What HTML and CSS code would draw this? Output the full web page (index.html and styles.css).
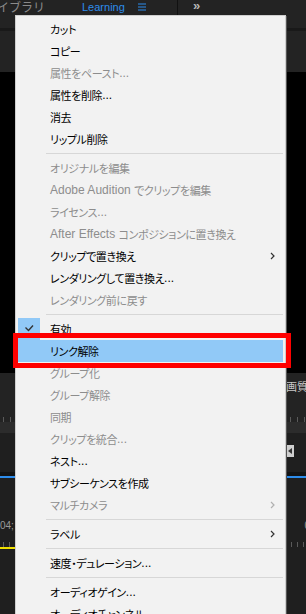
FILE: index.html
```html
<!DOCTYPE html>
<html lang="ja">
<head>
<meta charset="utf-8">
<link rel="stylesheet" href="styles.css">
</head>
<body>
<div class="app">
  <div class="topbar">
    <span class="lib">イブラリ</span>
    <span class="learning">Learning</span>
    <svg class="hamb" width="8" height="8" viewBox="0 0 8 8"><path d="M0 1h8M0 4h8M0 7h8" stroke="#2d8ceb" stroke-width="1.2"/></svg>
    <span class="vsep"></span>
    <span class="more">»</span>
  </div>
  <div class="topline"></div>
  <div class="gap"></div>
  <div class="monitor"></div>
  <div class="timeline">
    <div class="tl-head"><span class="quality">画質</span></div>
    <div class="ticks"></div>
    <div class="band"></div>
    <div class="tracks"><span class="toolicon"><span class="tri"></span></span></div>
    <div class="shade"></div>
    <div class="blueline"></div>
    <div class="lower">
      <div class="tc-row"><span class="tc">04;</span><span class="tc-r">0</span></div>
      <div class="ticks2"></div>
      <div class="yellow"></div>
    </div>
  </div>
</div>

<div class="menu">
  <div class="row">カット</div>
  <div class="row">コピー</div>
  <div class="row dis">属性をペースト<span class="lat">...</span></div>
  <div class="row">属性を削除<span class="lat">...</span></div>
  <div class="row">消去</div>
  <div class="row">リップル削除</div>
  <div class="sep"></div>
  <div class="row dis">オリジナルを編集</div>
  <div class="row dis"><span class="lat">Adobe Audition&nbsp;</span>でクリップを編集</div>
  <div class="row dis">ライセンス<span class="lat">...</span></div>
  <div class="row dis"><span class="lat">After Effects&nbsp;</span>コンポジションに置き換え</div>
  <div class="row">クリップで置き換え<svg class="chev" width="5" height="8" viewBox="0 0 5 8"><path d="M1 1l3 3-3 3" fill="none" stroke="#333" stroke-width="1.2"/></svg></div>
  <div class="row">レンダリングして置き換え<span class="lat">...</span></div>
  <div class="row dis">レンダリング前に戻す</div>
  <div class="sep"></div>
  <div class="row"><span class="check"><svg width="22" height="22" viewBox="0 0 22 22"><path d="M7.5 9.5l3 3 4.5-5" fill="none" stroke="#333" stroke-width="1.4"/></svg></span>有効</div>
  <div class="row hl">リンク解除</div>
  <div class="row dis">グループ化</div>
  <div class="row dis">グループ解除</div>
  <div class="row dis">同期</div>
  <div class="row dis">クリップを統合<span class="lat">...</span></div>
  <div class="row">ネスト<span class="lat">...</span></div>
  <div class="row">サブシーケンスを作成</div>
  <div class="row dis">マルチカメラ<svg class="chev" width="5" height="8" viewBox="0 0 5 8"><path d="M1 1l3 3-3 3" fill="none" stroke="#b0b0b0" stroke-width="1.2"/></svg></div>
  <div class="sep"></div>
  <div class="row">ラベル<svg class="chev" width="5" height="8" viewBox="0 0 5 8"><path d="M1 1l3 3-3 3" fill="none" stroke="#333" stroke-width="1.2"/></svg></div>
  <div class="sep"></div>
  <div class="row">速度・デュレーション<span class="lat">...</span></div>
  <div class="sep"></div>
  <div class="row">オーディオゲイン<span class="lat">...</span></div>
  <div class="row">オーディオチャンネル<span class="lat">...</span></div>
</div>
</body>
</html>
```

FILE: styles.css
```css
html, body {
  margin: 0;
  padding: 0;
}
body {
  width: 306px;
  height: 614px;
  overflow: hidden;
  background: #232323;
  position: relative;
  font-family: "Liberation Sans", "Noto Sans CJK JP", sans-serif;
}
.app {
  display: flex;
  flex-direction: column;
  height: 614px;
}
.topbar {
  height: 28px;
  background: #232323;
  display: flex;
  align-items: flex-start;
  flex: none;
}
.lib {
  margin-left: -3px;
  margin-top: -1px;
  font-size: 12px;
  line-height: 16px;
  color: #8a8a8a;
  font-family: "Noto Sans CJK JP", sans-serif;
  width: 85px;
}
.learning {
  font-size: 11px;
  line-height: 14px;
  color: #2d8ceb;
  width: 56px;
}
.hamb {
  margin-top: 3px;
}
.vsep {
  width: 1px;
  height: 15px;
  background: #111;
  margin-left: 31px;
}
.more {
  margin-left: 15px;
  font-size: 13px;
  line-height: 12px;
  font-weight: bold;
  color: #b8b8b8;
}
.topline {
  height: 3px;
  background: #191919;
  flex: none;
}
.gap {
  height: 41px;
  background: #232323;
  flex: none;
}
.monitor {
  height: 301px;
  background: #000;
  flex: none;
}
.timeline {
  flex: 1;
  display: flex;
  flex-direction: column;
  background: #1f1f1f;
}
.tl-head {
  height: 37px;
  background: #232323;
  display: flex;
  justify-content: flex-end;
  align-items: flex-start;
}
.quality {
  margin-top: 6px;
  margin-right: -2px;
  font-family: "Noto Sans CJK JP", sans-serif;
  font-size: 11px;
  line-height: 14px;
  color: #c8c8c8;
}
.ticks {
  height: 12px;
  background:
    repeating-linear-gradient(to right, transparent 0 3px, #5a5a5a 3px 4px, transparent 4px 7px) bottom / 100% 5px no-repeat,
    #232323;
}
.band {
  height: 11px;
  background: #2c2c2c;
}
.tracks {
  height: 39px;
  background: #1f1f1f;
  display: flex;
  justify-content: flex-end;
  align-items: flex-start;
}
.toolicon {
  margin-top: 12px;
  margin-right: 12px;
  width: 8px;
  height: 12px;
  background: #cfcfcf;
  display: flex;
  align-items: center;
  justify-content: center;
}
.tri {
  width: 0;
  height: 0;
  border-top: 3px solid transparent;
  border-bottom: 3px solid transparent;
  border-right: 4px solid #333;
}
.shade {
  height: 4px;
  background: #141414;
}
.blueline {
  height: 2px;
  background: #2d8ceb;
}
.lower {
  flex: 1;
  background: #1f1f1f;
  display: flex;
  flex-direction: column;
}
.tc-row {
  margin-top: 42px;
  height: 12px;
  display: flex;
  justify-content: space-between;
  font-size: 10px;
  line-height: 12px;
  color: #9a9a9a;
}
.tc-r {
  margin-right: -4px;
}
.ticks2 {
  margin-top: 10px;
  height: 5px;
  background: repeating-linear-gradient(to right, transparent 0 3px, #5a5a5a 3px 4px, transparent 4px 6px);
}
.yellow {
  width: 16px;
  height: 2px;
  background: #f0e000;
}

.menu {
  position: absolute;
  left: 15px;
  top: 15px;
  width: 271px;
  height: 640px;
  box-sizing: border-box;
  background: #f2f2f2;
  border: 1px solid #cfcfcf;
  box-shadow: 1px 1px 0 #555;
  padding-top: 2px;
  display: flex;
  flex-direction: column;
}
.row {
  position: relative;
  height: 22px;
  margin: 0 2px;
  padding-left: 32px;
  padding-right: 8px;
  display: flex;
  align-items: center;
  font-size: 11px;
  letter-spacing: -0.4px;
  color: #000;
  white-space: nowrap;
  font-feature-settings: "palt";
  flex: none;
}
.lat {
  font-size: 12px;
  letter-spacing: 0;
  font-feature-settings: normal;
}
.row.dis {
  color: #8d8d8d;
}
.chev {
  margin-left: auto;
}
.check {
  position: absolute;
  left: 0;
  top: 0;
  width: 22px;
  height: 22px;
  background: #91c9f7;
}
.check svg {
  display: block;
}
.row.hl {
  background: #91c9f7;
}
.row.hl::after {
  content: "";
  position: absolute;
  left: -5px;
  top: -7px;
  right: -8px;
  bottom: -6px;
  border: 5px solid #ff0000;
}
.sep {
  height: 1px;
  margin: 3px 2px 3px 30px;
  background: #d7d7d7;
  flex: none;
}
```
